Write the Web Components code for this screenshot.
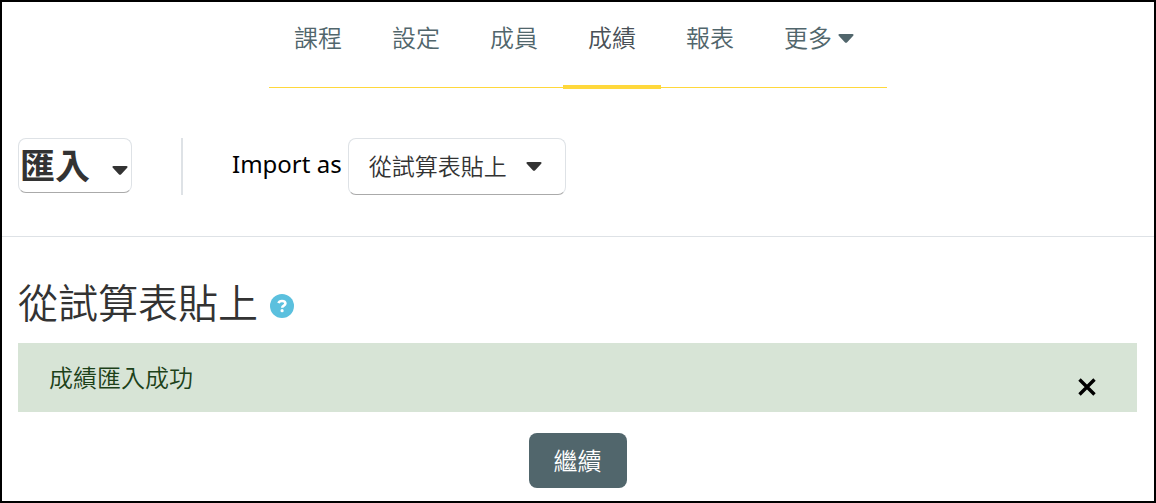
<!DOCTYPE html>
<html lang="zh-Hant">
<head>
<meta charset="utf-8">
<meta name="viewport" content="width=device-width, initial-scale=1">
<title>匯入</title>
<style>
  * { box-sizing: border-box; }
  body {
    margin: 0;
    min-height: 100vh;
    border: 2px solid #000;
    background: #fff;
    color: #333;
    font-family: "Noto Sans", "Noto Sans CJK TC", sans-serif;
    font-size: 24px;
    font-weight: 350;
    line-height: 36px;
  }
</style>
</head>
<body>
<grade-import-page></grade-import-page>

<script>
const caret = `<svg class="caret" width="16" height="9" viewBox="0 0 16 9" aria-hidden="true"><path d="M1.6 0h12.8c1.2 0 1.5 1 .8 1.8L9.2 8.2c-.7.8-1.7.8-2.4 0L.8 1.8C.1 1 .4 0 1.6 0z" fill="currentColor"/></svg>`;

class NavTab extends HTMLElement {
  constructor() {
    super();
    this.attachShadow({ mode: "open" });
  }

  connectedCallback() {
    const tag = this.hasAttribute("menu") ? "button" : "a";
    const attrs = tag === "a" ? 'href="#"' : 'type="button" aria-haspopup="true"';
    this.shadowRoot.innerHTML = `
      <style>
        :host { display: block; }
        a, button {
          box-sizing: border-box;
          display: flex;
          align-items: center;
          gap: 6px;
          height: 87px;
          padding: 0 25px 12px;
          border: 0;
          border-bottom: 4px solid transparent;
          background: none;
          color: #51666c;
          font: inherit;
          text-decoration: none;
          white-space: nowrap;
        }
        button { padding-right: 33px; }
        .caret { margin-top: 2px; }
        :host([active]) a {
          border-color: #ffd83b;
          color: #495057;
        }
      </style>
      <${tag} ${attrs}><slot></slot>${tag === "button" ? caret : ""}</${tag}>
    `;
  }
}
customElements.define("nav-tab", NavTab);

class CourseNav extends HTMLElement {
  constructor() {
    super();
    this.attachShadow({ mode: "open" });
    this.shadowRoot.innerHTML = `
      <style>
        :host { display: flex; justify-content: center; }
        nav {
          display: flex;
          height: 85px;
          border-bottom: 1px solid #ffd83b;
        }
      </style>
      <nav><slot></slot></nav>
    `;
  }
}
customElements.define("course-nav", CourseNav);

class SelectMenu extends HTMLElement {
  constructor() {
    super();
    this.attachShadow({ mode: "open" });
  }

  connectedCallback() {
    const label = this.getAttribute("label");
    const value = this.getAttribute("value");
    const hidden = this.hasAttribute("heading") ? "hidden" : "";
    this.shadowRoot.innerHTML = `
      <style>
        :host { display: flex; align-items: flex-start; gap: 6px; }
        label { padding-top: 8px; color: #000; font-weight: 400; }
        .box { display: grid; align-items: center; }
        select, .caret { grid-area: 1 / 1; }
        select {
          box-sizing: border-box;
          appearance: none;
          height: 57px;
          padding: 0 58px 2px 20px;
          border: 1px solid #dee2e6;
          border-bottom-color: #aaa;
          border-radius: 8px;
          background: #fff;
          color: #333;
          font: inherit;
          font-size: 23px;
        }
        .caret {
          justify-self: end;
          margin-right: 24px;
          color: #333;
          pointer-events: none;
        }
        :host([heading]) select {
          height: 55px;
          padding: 0 40px 0 1px;
          font-size: 35px;
          font-weight: 700;
        }
        :host([heading]) .caret { margin: 10px 4px 0 0; }
      </style>
      <label for="menu" ${hidden}>${label}</label>
      <div class="box">
        <select id="menu" aria-label="${label}"><option>${value}</option></select>
        ${caret}
      </div>
    `;
  }
}
customElements.define("select-menu", SelectMenu);

class PageHeading extends HTMLElement {
  constructor() {
    super();
    this.attachShadow({ mode: "open" });
    this.shadowRoot.innerHTML = `
      <style>
        :host { display: flex; align-items: center; gap: 12px; }
        h2 { margin: 0; font-size: 40px; font-weight: 350; line-height: 48px; }
        button {
          width: 24px;
          height: 24px;
          margin-top: 6px;
          padding: 0;
          border: 0;
          border-radius: 50%;
          background: #5bc0de;
        }
        svg { display: block; }
      </style>
      <h2><slot></slot></h2>
      <button type="button" aria-label="說明">
        <svg width="24" height="24" viewBox="0 0 24 24" fill="none" stroke="#fff" stroke-width="2.6">
          <path d="M8.5 9.2C9 7.500 10.300 7 12 7c2 0 3.400 1 3.400 2.500 0 2.300-3.200 2-3.200 4.300"/>
          <circle cx="12.1" cy="16.7" r="1.6" fill="#fff" stroke="none"/>
        </svg>
      </button>
    `;
  }
}
customElements.define("page-heading", PageHeading);

class AlertBox extends HTMLElement {
  constructor() {
    super();
    this.attachShadow({ mode: "open" });
    this.shadowRoot.innerHTML = `
      <style>
        :host {
          display: flex;
          justify-content: space-between;
          align-items: flex-start;
          padding: 17px 41px 16px 31px;
          background: #d7e4d6;
          color: #1c4119;
        }
        button {
          margin-top: 18px;
          padding: 0;
          border: 0;
          background: none;
          color: #000;
        }
        svg { display: block; }
      </style>
      <div role="alert"><slot></slot></div>
      <button type="button" aria-label="關閉">
        <svg width="18" height="18" viewBox="0 0 18 18" stroke="currentColor" stroke-width="3.4"><path d="M1.5 1.5l15 15M16.5 1.5l-15 15"/></svg>
      </button>
    `;
    this.shadowRoot.querySelector("button").addEventListener("click", () => this.remove());
  }
}
customElements.define("alert-box", AlertBox);

class PrimaryButton extends HTMLElement {
  constructor() {
    super();
    this.attachShadow({ mode: "open" });
    this.shadowRoot.innerHTML = `
      <style>
        :host { display: block; }
        button {
          display: block;
          padding: 10px 25px 9px;
          border: 0;
          border-radius: 8px;
          background: #51666c;
          color: #fff;
          font: inherit;
        }
      </style>
      <button type="button"><slot></slot></button>
    `;
  }
}
customElements.define("primary-button", PrimaryButton);

class GradeImportPage extends HTMLElement {
  constructor() {
    super();
    this.attachShadow({ mode: "open" });
    this.shadowRoot.innerHTML = `
      <style>
        :host { display: block; }
        .bar {
          display: flex;
          align-items: flex-start;
          gap: 49px;
          padding: 50px 16px 41px;
          border-bottom: 1px solid #dee2e6;
        }
        .divider { align-self: stretch; width: 2px; background: #dee2e6; }
        main { padding: 42px 17px 0 16px; }
        alert-box { margin: 16px 0 21px; }
        .actions { display: flex; justify-content: center; }
      </style>
      <course-nav>
        <nav-tab>課程</nav-tab>
        <nav-tab>設定</nav-tab>
        <nav-tab>成員</nav-tab>
        <nav-tab active>成績</nav-tab>
        <nav-tab>報表</nav-tab>
        <nav-tab menu>更多</nav-tab>
      </course-nav>
      <div class="bar">
        <select-menu heading label="成績選單" value="匯入"></select-menu>
        <div class="divider"></div>
        <select-menu label="Import as" value="從試算表貼上"></select-menu>
      </div>
      <main>
        <page-heading>從試算表貼上</page-heading>
        <alert-box>成績匯入成功</alert-box>
        <div class="actions"><primary-button>繼續</primary-button></div>
      </main>
    `;
  }
}
customElements.define("grade-import-page", GradeImportPage);
</script>
</body>
</html>
